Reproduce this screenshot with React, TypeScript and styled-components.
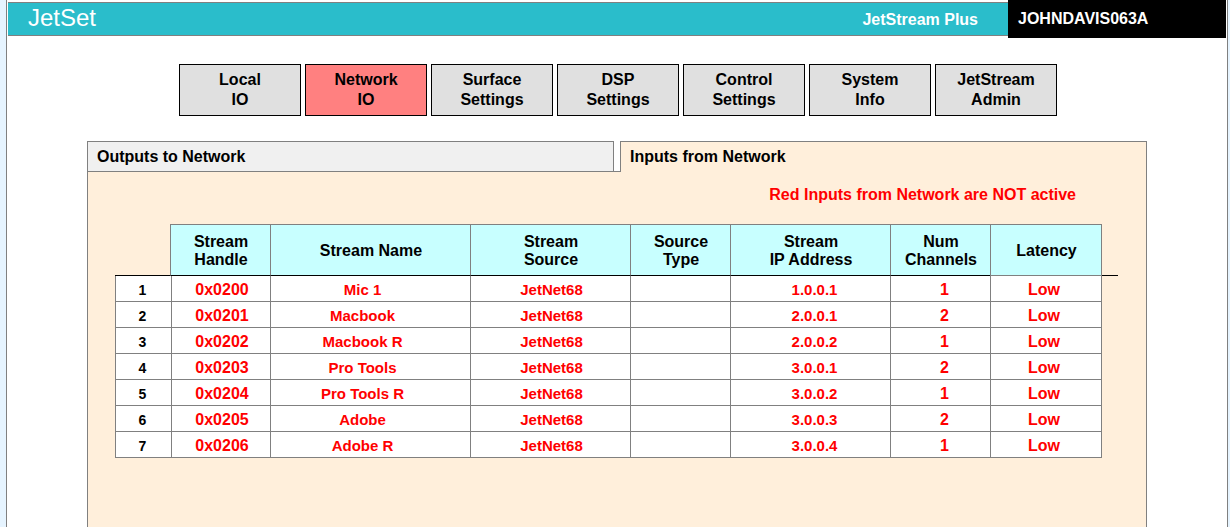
import React, { useState } from "react";
import styled, { createGlobalStyle } from "styled-components";

const line = "#808080";
const cream = "#ffefdb";

const GlobalStyle = createGlobalStyle`
  *, *::before, *::after { box-sizing: border-box; }
  body {
    margin: 0;
    background: #e6f4ff;
    color: #000;
    font-family: "Liberation Sans", Arial, sans-serif;
    font-size: 16px;
  }
`;

const Page = styled.div`
  display: flex;
  flex-direction: column;
  min-height: 100vh;
  margin: 0 2px 0 6px;
  background: #fff;
  border-left: 1px solid ${line};
  border-right: 1px solid ${line};
`;

const Header = styled.header`
  display: flex;
  align-items: flex-start;
  margin: 0 1px;
  color: #fff;
`;

const TitleBar = styled.div`
  display: flex;
  flex: 1;
  justify-content: space-between;
  height: 34px;
  margin-top: 2px;
  padding: 0 30px 0 20px;
  background: #2abdcb;
  border-top: 1px solid ${line};
  border-bottom: 1px solid ${line};
`;

const AppName = styled.h1`
  margin: 0;
  font-size: 24px;
  font-weight: 400;
  line-height: 30px;
`;

const Product = styled.span`
  font-weight: 700;
  line-height: 34px;
`;

const UnitName = styled.div`
  flex: 0 0 218px;
  height: 38px;
  padding-left: 10px;
  background: #000;
  font-weight: 700;
  line-height: 38px;
`;

const Nav = styled.nav`
  display: flex;
  flex-wrap: wrap;
  justify-content: center;
  gap: 4px;
  margin: 26px 0 0 2px;
`;

const NavButton = styled.button<{ $active: boolean }>`
  width: 122px;
  height: 52px;
  padding: 0 20px;
  background: ${(p) => (p.$active ? "#ff8080" : "#e0e0e0")};
  border: 1px solid #000;
  color: #000;
  font: inherit;
  font-weight: 700;
  line-height: 20px;
  cursor: pointer;
`;

const Content = styled.main`
  display: flex;
  flex: 1;
  flex-direction: column;
  margin: 25px 80px 0;
`;

const Tabs = styled.div`
  display: grid;
  grid-template-columns: 1fr 6px 1fr;
`;

const TabGap = styled.span`
  border-bottom: 1px solid ${line};
`;

const Tab = styled.button<{ $selected: boolean }>`
  height: 31px;
  padding: 0 9px;
  background: ${(p) => (p.$selected ? cream : "#f0f0f0")};
  border: 1px solid ${line};
  border-bottom-width: ${(p) => (p.$selected ? "0" : "1px")};
  color: #000;
  font: inherit;
  font-weight: 700;
  text-align: left;
  cursor: pointer;
`;

const Panel = styled.section`
  flex: 1;
  padding: 13px 28px 40px 27px;
  background: ${cream};
  border: 1px solid ${line};
  border-width: 0 1px;
`;

const Notice = styled.p`
  margin: 0 42px 19px 0;
  color: #f00;
  font-weight: 700;
  line-height: 20px;
  text-align: right;
`;

const StreamTable = styled.table`
  width: 100%;
  table-layout: fixed;
  border-collapse: separate;
  border-spacing: 0;
  font-weight: 700;
  text-align: center;
`;

const Col = styled.col<{ $width: number }>`
  width: ${(p) => p.$width}px;
`;

const HeadCell = styled.th<{ $last: boolean }>`
  height: 52px;
  padding: 1px 4px 0 5px;
  background: #c8ffff;
  border-top: 1px solid ${line};
  border-bottom: 1px solid ${(p) => (p.$last ? line : "#000")};
  border-left: 1px solid ${line};
  border-right: ${(p) => (p.$last ? `1px solid ${line}` : "0")};
  line-height: 18px;
  white-space: pre-line;

  &:nth-child(2) {
    border-left: 0;
  }
`;

const Corner = styled.td`
  padding: 0;
  border-right: 1px solid ${line};
  border-bottom: 1px solid #000;
`;

const Rule = styled.td`
  padding: 0;
  border-bottom: 1px solid #000;
`;

const cellBox = `
  height: 26px;
  border-left: 1px solid ${line};
  border-bottom: 1px solid ${line};
  background: #fff;
  line-height: 22px;
`;

const RowNumber = styled.th`
  ${cellBox}
  padding: 2px 2px 0 0;
  font-size: 14px;
`;

const Cell = styled.td<{ $small?: boolean; $shift?: "left" | "right" }>`
  ${cellBox}
  padding-top: 2px;
  padding-bottom: 0;
  padding-right: ${(p) => (p.$shift === "left" ? "16px" : "0")};
  padding-left: ${(p) => (p.$shift === "left" ? "0" : p.$shift === "right" ? "8px" : "2px")};
  color: #f00;
  font-size: ${(p) => (p.$small ? "15px" : "16px")};
`;

const LatencyCell = styled(Cell)`
  padding-right: 6px;
  border-right: 1px solid ${line};
`;

const sections = [
  "Local IO",
  "Network IO",
  "Surface Settings",
  "DSP Settings",
  "Control Settings",
  "System Info",
  "JetStream Admin",
];

const tabs = ["Outputs to Network", "Inputs from Network"];

const columnWidths = [56, 99, 200, 160, 100, 160, 100, 112, 16];

const headings = [
  "Stream\nHandle",
  "Stream Name",
  "Stream\nSource",
  "Source\nType",
  "Stream\nIP Address",
  "Num\nChannels",
  "Latency",
];

const streams = [
  { handle: "0x0200", name: "Mic 1", source: "JetNet68", type: "", ip: "1.0.0.1", channels: 1, latency: "Low" },
  { handle: "0x0201", name: "Macbook", source: "JetNet68", type: "", ip: "2.0.0.1", channels: 2, latency: "Low" },
  { handle: "0x0202", name: "Macbook R", source: "JetNet68", type: "", ip: "2.0.0.2", channels: 1, latency: "Low" },
  { handle: "0x0203", name: "Pro Tools", source: "JetNet68", type: "", ip: "3.0.0.1", channels: 2, latency: "Low" },
  { handle: "0x0204", name: "Pro Tools R", source: "JetNet68", type: "", ip: "3.0.0.2", channels: 1, latency: "Low" },
  { handle: "0x0205", name: "Adobe", source: "JetNet68", type: "", ip: "3.0.0.3", channels: 2, latency: "Low" },
  { handle: "0x0206", name: "Adobe R", source: "JetNet68", type: "", ip: "3.0.0.4", channels: 1, latency: "Low" },
];

export default function App() {
  const [section, setSection] = useState("Network IO");
  const [tab, setTab] = useState(1);

  return (
    <>
      <GlobalStyle />
      <Page>
        <Header>
          <TitleBar>
            <AppName>JetSet</AppName>
            <Product>JetStream Plus</Product>
          </TitleBar>
          <UnitName>JOHNDAVIS063A</UnitName>
        </Header>

        <Nav>
          {sections.map((s) => (
            <NavButton key={s} type="button" $active={s === section} onClick={() => setSection(s)}>
              {s.split(" ")[0]}
              <br />
              {s.split(" ")[1]}
            </NavButton>
          ))}
        </Nav>

        <Content>
          <Tabs role="tablist">
            {tabs.map((label, i) => (
              <React.Fragment key={label}>
                {i > 0 && <TabGap role="presentation" />}
                <Tab type="button" role="tab" aria-selected={i === tab} $selected={i === tab} onClick={() => setTab(i)}>
                  {label}
                </Tab>
              </React.Fragment>
            ))}
          </Tabs>

          <Panel role="tabpanel">
            <Notice>Red Inputs from Network are NOT active</Notice>
            <StreamTable>
              <colgroup>
                {columnWidths.map((w, i) => (
                  <Col key={i} $width={w} />
                ))}
              </colgroup>
              <thead>
                <tr>
                  <Corner />
                  {headings.map((h, i) => (
                    <HeadCell key={h} scope="col" $last={i === headings.length - 1}>
                      {h}
                    </HeadCell>
                  ))}
                  <Rule />
                </tr>
              </thead>
              <tbody>
                {streams.map((s, i) => (
                  <tr key={s.handle}>
                    <RowNumber scope="row">{i + 1}</RowNumber>
                    <Cell>{s.handle}</Cell>
                    <Cell $small $shift="left">{s.name}</Cell>
                    <Cell $small>{s.source}</Cell>
                    <Cell $small>{s.type}</Cell>
                    <Cell $small $shift="right">{s.ip}</Cell>
                    <Cell $shift="right">{s.channels}</Cell>
                    <LatencyCell>{s.latency}</LatencyCell>
                  </tr>
                ))}
              </tbody>
            </StreamTable>
          </Panel>
        </Content>
      </Page>
    </>
  );
}
